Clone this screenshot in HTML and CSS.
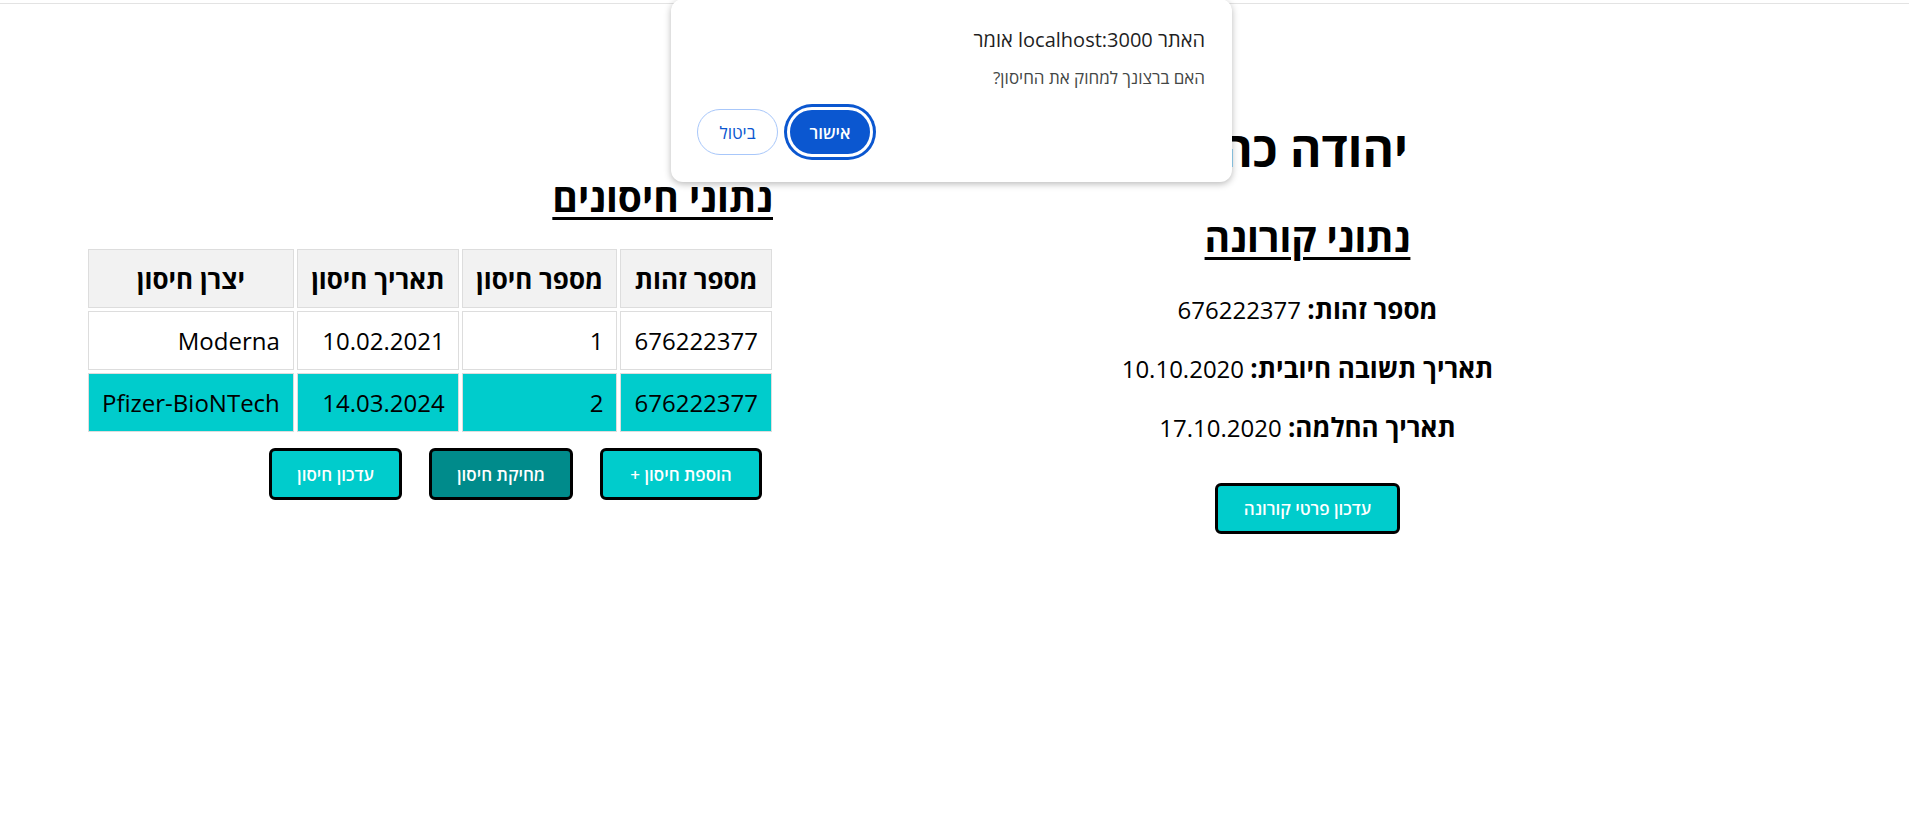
FILE: index.html
```html
<!DOCTYPE html>
<html lang="he" dir="rtl">
<head>
<meta charset="utf-8">
<title>נתוני חולה</title>
<link rel="stylesheet" href="styles.css">
</head>
<body>
<div class="topline"></div>
<main class="page">
  <section class="corona">
    <h1 class="name">יהודה כהן</h1>
    <h2 class="section-title corona-title">נתוני קורונה</h2>
    <p class="info"><b>מספר זהות:</b> 676222377</p>
    <p class="info"><b>תאריך תשובה חיובית:</b> 10.10.2020</p>
    <p class="info"><b>תאריך החלמה:</b> 17.10.2020</p>
    <div class="corona-actions">
      <button class="btn btn-wide">עדכון פרטי קורונה</button>
    </div>
  </section>
  <section class="vaccines">
    <h2 class="section-title vac-title">נתוני חיסונים</h2>
    <table class="vac-table">
      <thead>
        <tr>
          <th class="c-id">מספר זהות</th>
          <th class="c-num">מספר חיסון</th>
          <th class="c-date">תאריך חיסון</th>
          <th class="c-maker">יצרן חיסון</th>
        </tr>
      </thead>
      <tbody>
        <tr>
          <td>676222377</td>
          <td>1</td>
          <td>10.02.2021</td>
          <td>Moderna</td>
        </tr>
        <tr class="selected">
          <td>676222377</td>
          <td>2</td>
          <td>14.03.2024</td>
          <td>Pfizer-BioNTech</td>
        </tr>
      </tbody>
    </table>
    <div class="vac-actions">
      <button class="btn btn-add">הוספת חיסון +</button>
      <button class="btn btn-dark btn-del">מחיקת חיסון</button>
      <button class="btn btn-upd">עדכון חיסון</button>
    </div>
  </section>
</main>

<div class="dialog" role="dialog">
  <div class="dialog-title">האתר localhost:3000 אומר</div>
  <div class="dialog-msg">האם ברצונך למחוק את החיסון?</div>
  <div class="dialog-actions">
    <button class="d-btn d-ok">אישור</button>
    <button class="d-btn d-cancel">ביטול</button>
  </div>
</div>
</body>
</html>
```

FILE: styles.css
```css
html, body {
  margin: 0;
  padding: 0;
  background: #ffffff;
}

body {
  font-family: "Open Sans", "Liberation Sans", "DejaVu Sans", sans-serif;
  color: #000;
  direction: rtl;
  position: relative;
  min-height: 823px;
}

.topline {
  height: 3px;
  border-bottom: 1px solid #e3e3e3;
}

.page {
  display: flex;
  flex-direction: row;
  align-items: flex-start;
  padding-left: 85px;
  padding-right: 69px;
}

/* Right column */
.corona {
  flex: 1;
  text-align: center;
  padding-top: 117px;
}

.name {
  margin: 0;
  font-size: 48px;
  line-height: 56px;
  font-weight: 700;
}

.section-title {
  margin: 0;
  font-size: 39px;
  line-height: 46px;
  font-weight: 700;
  text-decoration: underline;
  text-decoration-thickness: 3px;
  text-underline-offset: 5px;
}

.corona-title {
  margin-top: 37px;
}

.info {
  margin: 26px 0 0;
  font-size: 24px;
  line-height: 32px;
}

.info:first-of-type {
  margin-top: 33px;
}

.info b {
  font-weight: 700;
  font-size: 26px;
}

.corona-actions {
  margin-top: 39px;
  display: flex;
  justify-content: center;
}

/* Buttons */
.btn {
  font-family: "Open Sans", "Liberation Sans", sans-serif;
  font-size: 17px;
  font-weight: 600;
  color: #ffffff;
  background: #00cccc;
  border: 3px solid #000;
  border-radius: 6px;
  height: 52px;
  padding: 0;
  cursor: pointer;
}

.btn-wide { width: 185px; height: 51px; }
.btn-add { width: 162px; }
.btn-del { width: 144px; }
.btn-upd { width: 133px; }

.btn-dark {
  background: #008b8b;
}

/* Left column */
.vaccines {
  width: 690px;
  padding-top: 170px;
}

.vac-title {
  text-align: right;
  margin-right: 2px;
}

.vac-table {
  margin-top: 26px;
  border-collapse: separate;
  border-spacing: 3px;
  font-size: 24px;
}

.vac-table th,
.vac-table td {
  border: 1px solid #dddddd;
  height: 59px;
  padding: 0 13px;
  box-sizing: border-box;
  line-height: 32px;
  white-space: nowrap;
}

.vac-table td {
  text-align: right;
}

.vac-table th {
  background: #f2f2f2;
  font-weight: 700;
  font-size: 26px;
  text-align: center;
}

.c-id { width: 152px; }
.c-num { width: 158px; }
.c-date { width: 164px; }
.c-maker { width: 201px; }

.vac-table tr.selected td {
  background: #00cccc;
}

.vac-actions {
  display: flex;
  gap: 27px;
  margin-top: 13px;
  padding-right: 13px;
}

/* Alert dialog */
.dialog {
  position: absolute;
  top: -1px;
  left: 671px;
  width: 561px;
  height: 183px;
  box-sizing: border-box;
  background: #ffffff;
  border-radius: 12px;
  box-shadow: 0 2px 7px rgba(0, 0, 0, 0.28);
  padding: 27px 27px 0 26px;
  font-family: "Open Sans", "Liberation Sans", sans-serif;
  direction: rtl;
}

.dialog-title {
  font-size: 20px;
  line-height: 28px;
  color: #1f1f1f;
}

.dialog-msg {
  margin-top: 13px;
  font-size: 17px;
  line-height: 22px;
  color: #444746;
}

.dialog-actions {
  display: flex;
  flex-direction: row-reverse;
  justify-content: flex-end;
  align-items: center;
  gap: 6px;
  margin-top: 18px;
  direction: ltr;
}

.d-btn {
  font-family: "Open Sans", "Liberation Sans", sans-serif;
  font-size: 17px;
  font-weight: 600;
  border-radius: 999px;
  cursor: pointer;
  padding: 0;
}

.d-ok {
  background: #0b57d0;
  color: #ffffff;
  border: 3px solid #ffffff;
  box-shadow: 0 0 0 3px #0b57d0;
  width: 86px;
  height: 50px;
  margin: 0 3px;
}

.d-cancel {
  width: 81px;
  height: 46px;
  background: #ffffff;
  color: #0b57d0;
  border: 1px solid #a8c7fa;
  font-weight: 500;
}
```
